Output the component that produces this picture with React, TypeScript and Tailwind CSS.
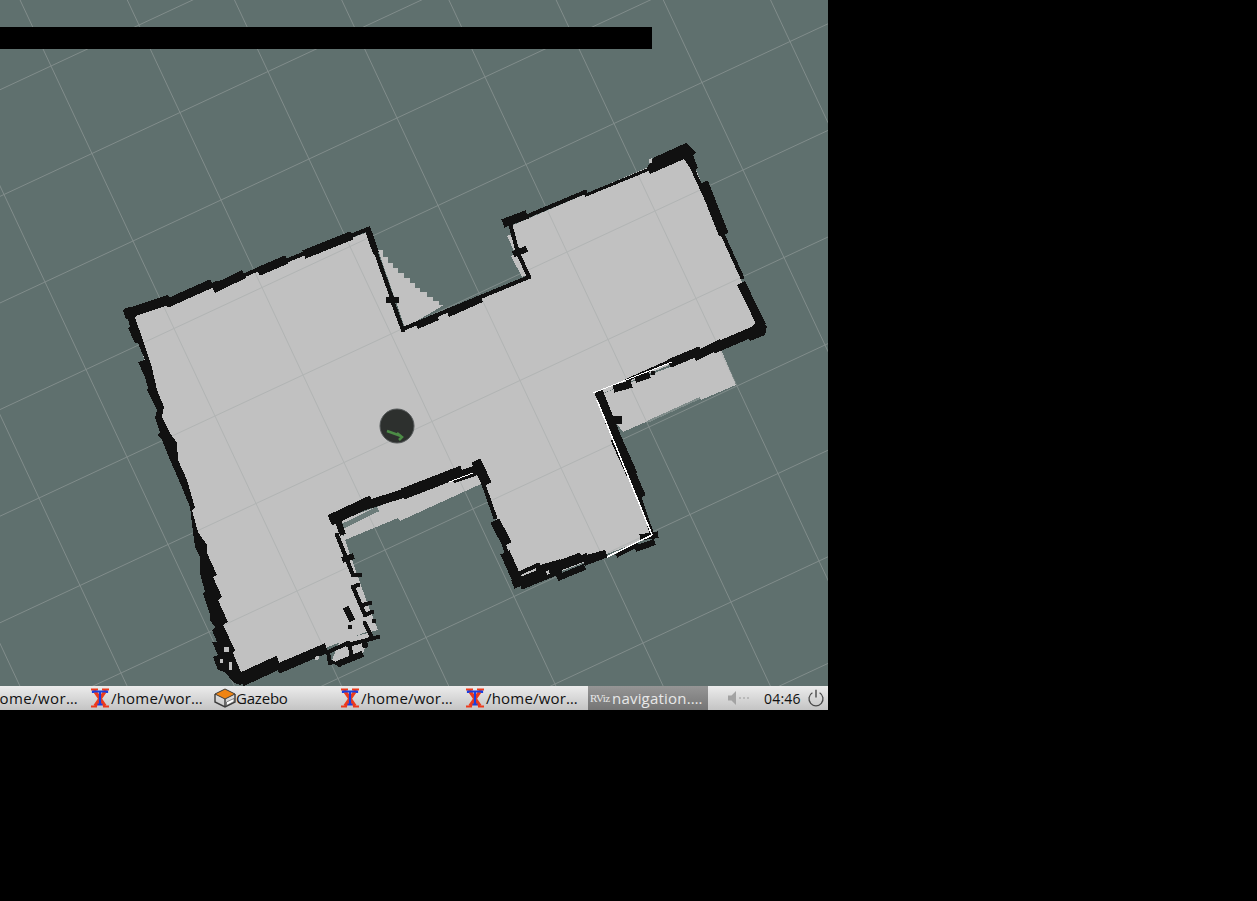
import React from "react";

type Wall = [number, number, number, number, number];

const ux = 41;
const uy = 87.5;
const vx = 88;
const vy = -41;
const ox = 567;
const oy = 252;

const range = [-9, -8, -7, -6, -5, -4, -3, -2, -1, 0, 1, 2, 3, 4, 5, 6, 7, 8, 9];

const walls: Wall[] = [
  // top left run
  [129, 313, 165, 301, 8],
  [170, 302, 208, 285, 7],
  [208, 287, 217, 283, 4],
  [217, 287, 240, 276, 7],
  [240, 277, 259, 269, 4],
  [262, 270, 283, 261, 7],
  [283, 262, 308, 252, 4],
  [308, 253, 348, 237, 7],
  [348, 237, 368, 229, 4],
  // notch
  [368, 230, 375, 250, 5],
  [375, 250, 392, 298, 4],
  [389, 300, 396, 300, 5],
  [393, 303, 403, 330, 4],
  [403, 329, 529, 277, 4],
  [420, 324, 434, 318, 6],
  [451, 312, 478, 300, 6],
  [529, 277, 518, 253, 4],
  [518, 253, 511, 227, 4],
  [516, 253, 524, 250, 5],
  [507, 222, 523, 216, 7],
  // top right run
  [523, 218, 585, 192, 4],
  [586, 195, 647, 170, 3],
  [690, 163, 742, 277, 4],
  [705, 187, 722, 230, 8],
  [743, 287, 760, 322, 7],
  [757, 330, 717, 347, 8],
  [718, 345, 698, 355, 7],
  [697, 352, 673, 362, 7],
  [672, 360, 627, 380, 3],
  [617, 388, 628, 385, 6],
  [638, 379, 647, 376, 5],
  // right inner
  [600, 395, 617, 438, 7],
  [609, 420, 618, 420, 7],
  [618, 443, 630, 470, 9],
  [630, 470, 640, 493, 7],
  [638, 493, 653, 537, 4],
  // bottom right
  [643, 537, 655, 535, 5],
  [638, 548, 652, 543, 5],
  [618, 555, 637, 545, 4],
  [587, 561, 603, 555, 6],
  [577, 560, 585, 557, 5],
  [585, 557, 603, 552, 3],
  [560, 577, 582, 568, 5],
  [540, 569, 557, 564, 6],
  [553, 568, 577, 559, 8],
  [520, 573, 538, 565, 4],
  [517, 583, 542, 573, 7],
  [523, 587, 560, 572, 4],
  // bottom notch
  [478, 465, 485, 480, 8],
  [483, 483, 495, 517, 4],
  [497, 525, 505, 540, 8],
  [503, 542, 508, 557, 4],
  [507, 557, 515, 575, 8],
  [477, 470, 457, 477, 8],
  [457, 473, 408, 492, 9],
  [408, 492, 367, 505, 7],
  [367, 503, 335, 518, 9],
  [337, 518, 342, 532, 5],
  // bottom left stub
  [337, 535, 353, 575, 4],
  [345, 559, 351, 557, 5],
  [353, 575, 360, 575, 4],
  [353, 587, 365, 615, 4],
  [353, 587, 358, 585, 4],
  [363, 605, 370, 603, 4],
  [365, 615, 372, 612, 4],
  [365, 623, 372, 638, 4],
  [347, 610, 351, 618, 5],
  [378, 637, 348, 645, 4],
  [348, 643, 328, 652, 4],
  [350, 647, 352, 658, 4],
  [328, 652, 330, 663, 4],
  [360, 655, 340, 663, 5],
  [330, 661, 340, 665, 3],
  [322, 650, 282, 667, 8],
  [273, 665, 247, 677, 11],
];

const dots: [number, number, number][] = [
  [653, 373, 2.5],
  [374, 621, 2.5],
  [350, 627, 2.5],
  [365, 645, 3],
];

const whiteLines: Wall[] = [
  [593, 393, 672, 362, 1],
  [597, 400, 652, 535, 1.5],
  [652, 535, 607, 557, 1.5],
  [449, 482, 473, 473, 1],
];

// left wall outline, outer edge going down and floor edge coming back up
const leftWall =
  "125,308 130,327 128,328 135,343 138,343 145,360 138,362 145,377 148,388 147,390 157,410 155,418 160,432 157,435 162,440 170,460 178,478 190,507 193,532 195,547 200,557 200,573 205,592 203,593 210,615 210,620 215,627 212,630 217,642 212,642 218,655 213,657 218,670 225,672 233,682 240,685 246,680 240,670 233,653 235,650 223,625 228,622 218,600 222,597 213,577 217,575 207,553 207,545 198,532 192,510 195,508 187,480 178,460 177,443 170,433 162,417 164,407 157,390 152,368 142,337 135,318 140,305";

const stairs =
  "378,250 383,250 383,257 388,257 388,263 393,263 393,268 398,268 398,273 404,273 404,278 410,278 410,283 415,283 415,288 420,288 420,292 427,292 427,297 433,297 433,301 439,301 439,305 444,305 405,328";

function MapView() {
  return (
    <svg width="828" height="686" viewBox="0 0 828 686" className="block">
      <rect width="828" height="686" fill="#5f706e" />
      {/* explored floor */}
      <g shapeRendering="crispEdges" fill="#c1c1c1">
        <polygon points="135,316 368,232 403,330 529,277 511,226 688,150 760,326 597,396 652,537 519,587 479,467 337,517 376,628 240,682 235,670 198,532 135,330" />
        <polygon points={stairs} />
        <polygon points="720,347 736,385 701,400 700,398 623,432 620,428 597,396" />
        <polygon points="340,520 480,470 483,483 400,521 398,518 345,540" />
        <polygon points="507,236 512,234 527,275 522,277 511,256 515,253" />
        <polygon points="340,640 372,632 362,655 330,665" />
        <polygon points="345,558 350,556 370,610 378,630 370,632" />
      </g>
      {/* grid sits on top of the map */}
      <g stroke="#a3a9a8" strokeWidth="1" opacity="0.5">
        {range.map((i) => (
          <line
            key={"u" + i}
            x1={ox + i * vx - 12 * ux}
            y1={oy + i * vy - 12 * uy}
            x2={ox + i * vx + 12 * ux}
            y2={oy + i * vy + 12 * uy}
          />
        ))}
        {range.map((i) => (
          <line
            key={"v" + i}
            x1={ox + i * ux - 12 * vx}
            y1={oy + i * uy - 12 * vy}
            x2={ox + i * ux + 12 * vx}
            y2={oy + i * uy + 12 * vy}
          />
        ))}
      </g>
      <g shapeRendering="crispEdges">
        <line x1="343" y1="526" x2="378" y2="509" stroke="#6c7c7a" strokeWidth="5" />
        <line x1="647" y1="422" x2="700" y2="398" stroke="#7f8c8a" strokeWidth="2" />
        <polygon fill="#111111" points={leftWall} />
        <g stroke="#111111" strokeLinecap="square">
          {walls.map((w, idx) => (
            <line key={idx} x1={w[0]} y1={w[1]} x2={w[2]} y2={w[3]} strokeWidth={w[4] >= 5 ? w[4] * 1.25 : w[4]} />
          ))}
        </g>
        <polygon
          fill="#111111"
          points="647,168 653,158 686,143 696,152 693,155 698,168 693,172 684,159 650,174"
        />
        <polygon fill="#111111" points="757,322 767,326 765,335 750,341 745,332" />
        <polygon fill="#c1c1c1" points="649,159 652,158 652,163 649,163" />
        {dots.map((d, idx) => (
          <circle key={idx} cx={d[0]} cy={d[1]} r={d[2]} fill="#111111" />
        ))}
        <circle cx="317" cy="658" r="2" fill="#c1c1c1" />
        <rect x="224" y="647" width="5" height="5" fill="#c1c1c1" />
        <rect x="229" y="662" width="3" height="8" fill="#c1c1c1" />
        <rect x="220" y="659" width="3" height="4" fill="#c1c1c1" />
        <g stroke="#ffffff">
          {whiteLines.map((w, idx) => (
            <line key={idx} x1={w[0]} y1={w[1]} x2={w[2]} y2={w[3]} strokeWidth={w[4]} />
          ))}
        </g>
      </g>
      {/* robot */}
      <circle cx="397" cy="426" r="17" fill="#2d302e" stroke="#55595a" strokeWidth="1" />
      <path d="M387 431 L401 436 M397 433 L402 437 L399 440" stroke="#4c8c46" strokeWidth="2.5" fill="none" />
    </svg>
  );
}

function XIcon() {
  return (
    <svg width="20" height="20" viewBox="0 0 20 20" className="shrink-0">
      <path d="M1 1.5 H8 M12 1.5 H19 M1 18.5 H7 M13 18.5 H19" stroke="#ee3a1c" strokeWidth="2" />
      <path d="M4 2 L15 18 M16 2 L5 18" stroke="#ee3a1c" strokeWidth="3.5" />
      <path d="M3 5 V3.5 H17 V5 M10 3.5 V16 M7.5 16.5 H12.5" stroke="#1a3fe0" strokeWidth="2.2" fill="none" />
    </svg>
  );
}

function GazeboIcon() {
  return (
    <svg width="22" height="20" viewBox="0 0 22 20" className="shrink-0">
      <path d="M1 6 L11 1 L21 6 L11 11 Z" fill="#ef8412" stroke="#3c3c3c" strokeWidth="1" />
      <path d="M1 6 V14 L11 19 L21 14 V6 M11 11 V19" fill="none" stroke="#3c3c3c" strokeWidth="1.4" />
      <path d="M12.5 14 L20 10.5 V13.5 L12.5 17.5 Z" fill="#ffffff" stroke="#3c3c3c" strokeWidth="0.6" />
    </svg>
  );
}

function MuteIcon() {
  return (
    <svg width="24" height="16" viewBox="0 0 24 16" className="shrink-0">
      <path d="M1 5.5 H4.5 L9 1 V15 L4.5 10.5 H1 Z" fill="#a3a3a3" />
      <path d="M12 8 H14 M16 8 H18 M20 8 H22" stroke="#b0b0b0" strokeWidth="1.4" />
    </svg>
  );
}

function PowerIcon() {
  return (
    <svg width="18" height="18" viewBox="0 0 18 18" className="shrink-0">
      <path d="M5.4 3.8 A7 7 0 1 0 12.6 3.8" fill="none" stroke="#4a4a4a" strokeWidth="1.3" />
      <path d="M9 0.8 V8.5" stroke="#4a4a4a" strokeWidth="1.4" />
    </svg>
  );
}

function Terminal({ width }: { width: string }) {
  return (
    <div className={`flex items-center gap-[1px] ${width}`}>
      <XIcon />
      <span>/home/wor…</span>
    </div>
  );
}

export default function App() {
  return (
    <div className="w-[1257px] h-[901px] bg-black overflow-hidden">
      <div className="relative w-[828px]">
        <MapView />
        <div className="absolute top-[27px] left-0 w-[652px] h-[22px] bg-black" />
        <div className="flex items-center h-[24px] bg-gradient-to-b from-[#ececec] to-[#c4c4c4] text-[#111111] text-[15px] tracking-[0.2px] font-['Open_Sans',sans-serif] whitespace-nowrap overflow-hidden">
          <div className="flex justify-end w-[78px] mr-[12px] tracking-[0.4px]">
            <span>ome/wor…</span>
          </div>
          <Terminal width="w-[124px]" />
          <div className="flex items-center w-[126px] tracking-[-0.2px]">
            <GazeboIcon />
            <span>Gazebo</span>
          </div>
          <Terminal width="w-[125px]" />
          <Terminal width="w-[124px]" />
          <div className="flex items-center w-[120px] h-full pl-[2px] -ml-[1px] bg-gradient-to-b from-[#959595] to-[#757575] text-[#e8e8e8]">
            <span className="font-['Liberation_Serif',serif] text-[11px] w-[22px] tracking-[-0.5px]">RViz</span>
            <span>navigation.…</span>
          </div>
          <div className="ml-[19px] w-[37px]">
            <MuteIcon />
          </div>
          <span className="text-[14px] w-[43px]">04:46</span>
          <PowerIcon />
        </div>
      </div>
    </div>
  );
}
